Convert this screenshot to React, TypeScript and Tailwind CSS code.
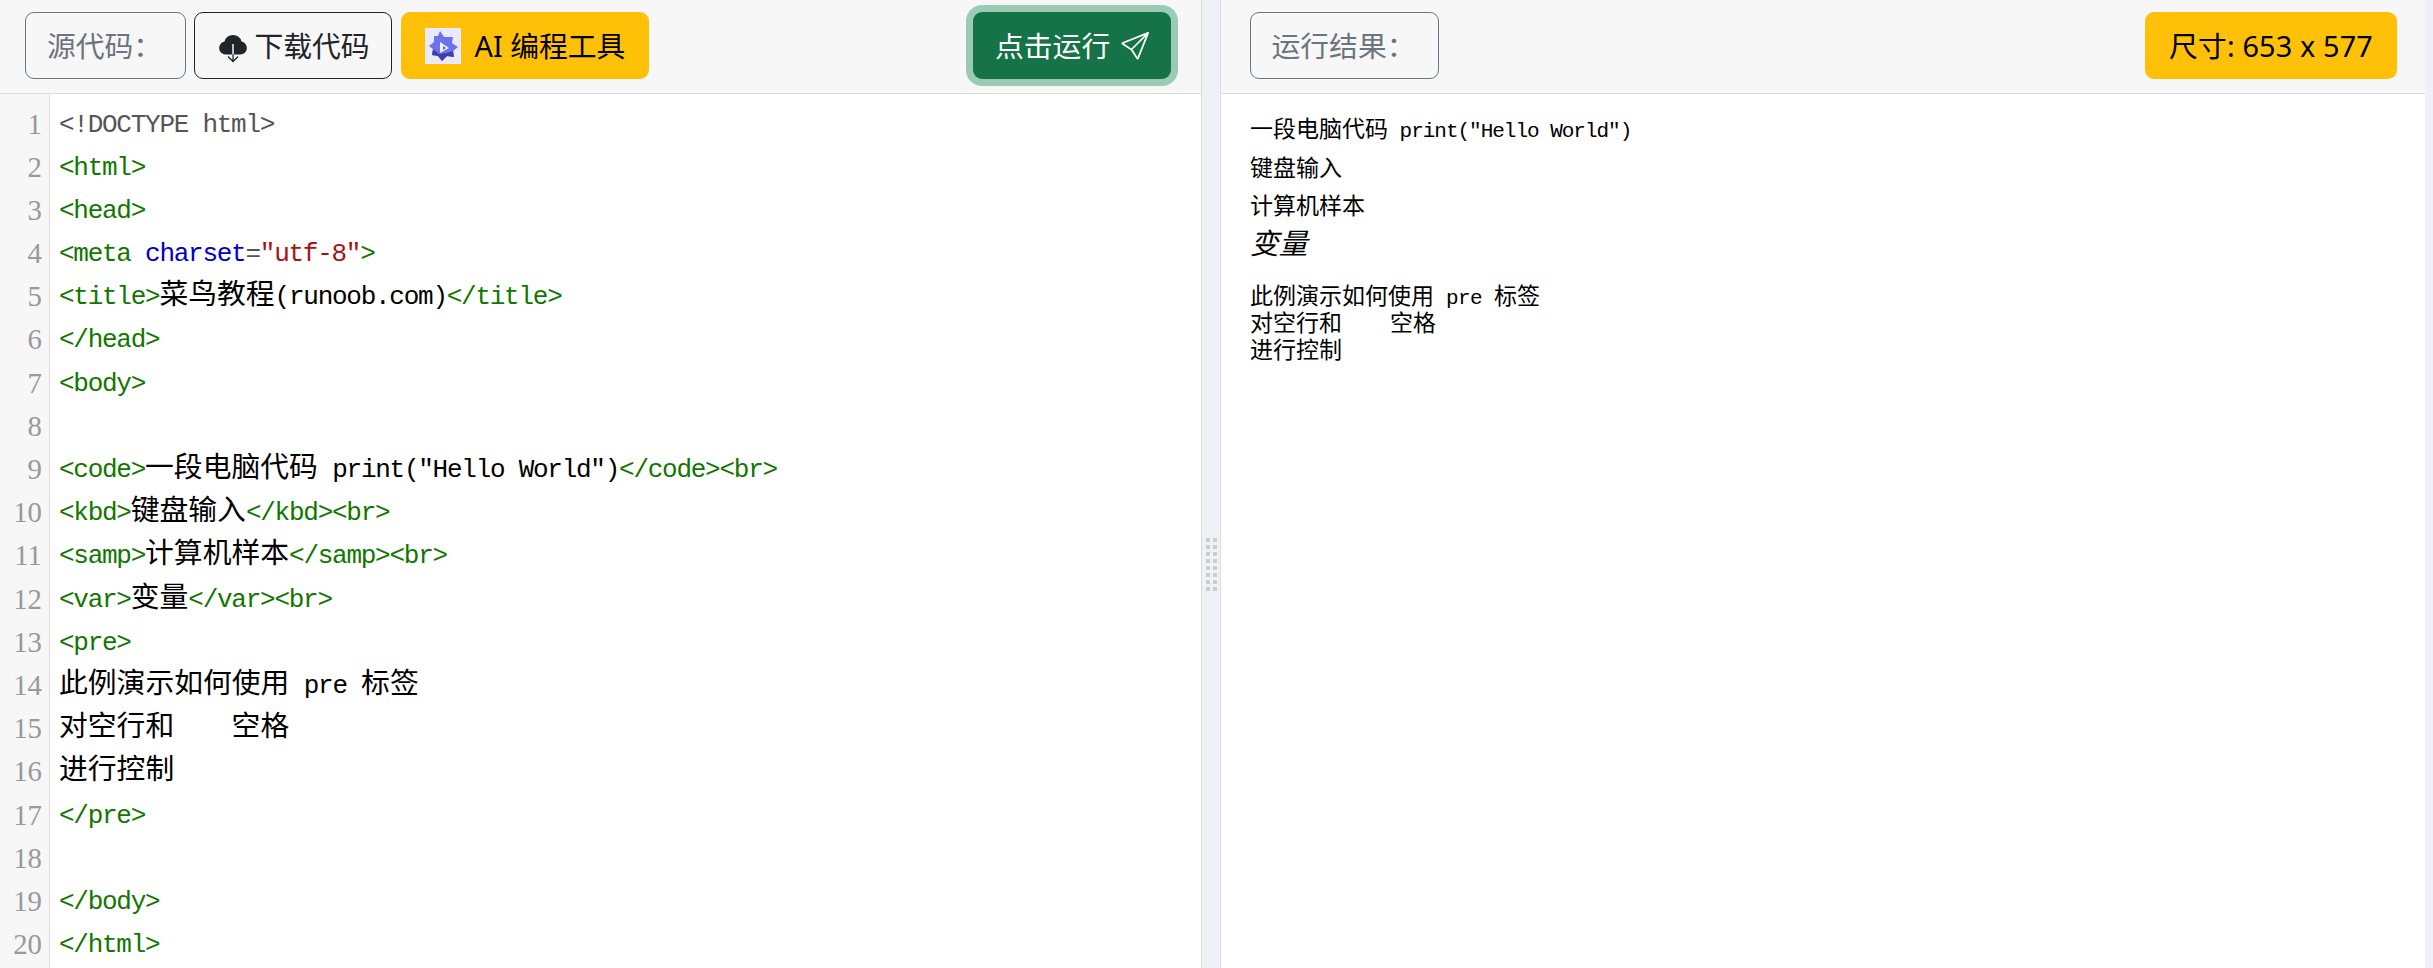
import React from "react";
import { BsSend } from "react-icons/bs";

const MONO = "font-['Liberation_Mono','Noto_Sans_CJK_SC',monospace]";

function Mixed({ text, latin, cjk }: { text: string; latin: string; cjk: string }) {
  const parts = text.match(/[\u2E80-\uFFFF]+|[^\u2E80-\uFFFF]+/g) || [];
  return (
    <>
      {parts.map((p, i) =>
        /[\u2E80-\uFFFF]/.test(p) ? (
          <span key={i} className={cjk}>{p}</span>
        ) : (
          <span key={i} className={latin}>{p}</span>
        )
      )}
    </>
  );
}

type Seg = [string, string];
const T = "text-[#117700]";
const K = "text-black";
const LINES: Seg[][] = [
  [["<!DOCTYPE html>", "text-[#555555]"]],
  [["<html>", T]],
  [["<head>", T]],
  [["<meta ", T], ["charset", "text-[#0000cc]"], ["=", "text-[#555555]"], ["\"utf-8\"", "text-[#aa1111]"], [">", T]],
  [["<title>", T], ["菜鸟教程(runoob.com)", K], ["</title>", T]],
  [["</head>", T]],
  [["<body>", T]],
  [],
  [["<code>", T], ["一段电脑代码 print(\"Hello World\")", K], ["</code><br>", T]],
  [["<kbd>", T], ["键盘输入", K], ["</kbd><br>", T]],
  [["<samp>", T], ["计算机样本", K], ["</samp><br>", T]],
  [["<var>", T], ["变量", K], ["</var><br>", T]],
  [["<pre>", T]],
  [["此例演示如何使用 pre 标签", K]],
  [["对空行和    空格", K]],
  [["进行控制", K]],
  [["</pre>", T]],
  [],
  [["</body>", T]],
  [["</html>", T]],
];

function Code({ text, className }: { text: string; className: string }) {
  return (
    <span className={className}>
      <Mixed text={text} latin="text-[26px] tracking-[-1.26px]" cjk="text-[28.8px]" />
    </span>
  );
}

function Header({ children }: { children: React.ReactNode }) {
  return (
    <div className="h-[94px] shrink-0 bg-[#f7f7f7] border-b border-[#dddddd] flex items-start justify-between pt-3 font-['Noto_Sans','Noto_Sans_CJK_SC',sans-serif] text-[28.8px]">
      {children}
    </div>
  );
}

function Label({ children, width }: { children: React.ReactNode; width: string }) {
  return (
    <div className={`h-[67px] ${width} flex items-center justify-center pr-[2px] rounded-[9px] border border-[#6c757d] text-[#6c757d]`}>
      {children}
    </div>
  );
}

export default function App() {
  return (
    <div className="w-[2433px] h-[968px] overflow-hidden flex bg-[#eef1f6] pr-2">
      <section className="w-[1202px] shrink-0 flex flex-col bg-white border-r border-[#dddddd]">
        <Header>
          <div className="flex pl-[25px]">
            <Label width="w-[161px]">源代码：</Label>
            <button className="ml-2 h-[67px] w-[198px] flex items-center justify-center gap-[6px] pl-[2px] rounded-[9px] border border-[#212529] text-[#212529]">
              <svg viewBox="0 0 30 30" className="w-[30px] h-[30px] mt-1" aria-hidden="true">
                <path d="M7.5 21.5a6.5 6.5 0 0 1-1-12.9 8.8 8.8 0 0 1 17 0 6.5 6.5 0 0 1-1 12.9z" fill="#212529" />
                <path d="M10 23.5l5 5 5-5M15 21v7" fill="none" stroke="#212529" strokeWidth="1.3" />
                <path d="M15 11v10.5" fill="none" stroke="#f7f7f7" strokeWidth="1.5" />
              </svg>
              下载代码
            </button>
            <button className="ml-[9px] h-[67px] w-[248px] flex items-center justify-center gap-[14px] rounded-[9px] bg-[#ffc107] text-black">
              <svg viewBox="0 0 36 36" className="w-9 h-9" aria-hidden="true">
                <rect width="36" height="36" fill="#e8eafb" />
                <path d="M15 3l4 6 9 0-1 6 6 4-5 4 1 6-7-1-5 5-4-5-6-1 1-6-4-3 5-4 0-6 4 0z" fill="#6a72ee" />
                <path d="M8 21l-1 6 6 1 4 5 5-5 7 1-1-6-6 2-8 1z" fill="#3d3fa8" />
                <path d="M15 14l9 6-9 5z" fill="#f1f2fd" />
                <path d="M18 18l3 2-3 2z" fill="#5a5fdc" />
              </svg>
              AI 编程工具
            </button>
          </div>
          <button className="mr-[30px] h-[67px] w-[198px] flex items-center justify-start gap-[11px] pl-[22px] rounded-[9px] bg-[#157347] text-white ring-[7px] ring-[#9ccbb5]">
            点击运行
            <BsSend className="w-7 h-7" />
          </button>
        </Header>
        <div className="flex-1 flex min-h-0">
          <div className="w-[50px] shrink-0 bg-[#f7f7f7] border-r border-[#dddddd] pt-[8.5px] pr-[7px] text-right text-[#999999] font-['Liberation_Serif','Noto_Sans_CJK_SC',serif] text-[28.8px]">
            {LINES.map((_, i) => (
              <div key={i} className="h-[43.2px] leading-[43.2px]">{i + 1}</div>
            ))}
          </div>
          <pre className={`flex-1 pt-[8.5px] pl-[9px] ${MONO} text-[28.8px]`}>
            {LINES.map((segs, i) => (
              <div key={i} className="h-[43.2px] leading-[43.2px] whitespace-pre">
                {segs.map((s, j) => (
                  <Code key={j} text={s[0]} className={s[1]} />
                ))}
              </div>
            ))}
          </pre>
        </div>
      </section>
      <div className="w-[18px] shrink-0 flex justify-center pt-[538px]">
        <div className="grid grid-cols-2 gap-x-[3px] gap-y-[3px] h-fit">
          {Array.from({ length: 16 }).map((_, i) => (
            <span key={i} className="w-[4px] h-[4px] bg-[#cccccc]" />
          ))}
        </div>
      </div>
      <section className="flex-1 flex flex-col bg-white border-l border-[#dddddd] min-w-0">
        <Header>
          <div className="pl-[29px]">
            <Label width="w-[189px]">运行结果：</Label>
          </div>
          <div className="mr-[28px] h-[67px] w-[252px] flex items-center justify-center rounded-[9px] bg-[#ffc107] text-black tracking-[0.15px]">
            尺寸: 653 x 577
          </div>
        </Header>
        <div className={`pl-[29px] pt-[20px] text-[23px] text-black ${MONO}`}>
          <div className="h-[37px] leading-[34px] whitespace-pre">
            <Mixed text={'一段电脑代码 print("Hello World")'} latin="text-[21px] tracking-[-1.02px]" cjk="text-[23px]" />
          </div>
          <div className="h-[38px] leading-[39px]">键盘输入</div>
          <div className="h-[35px] leading-[38px]">计算机样本</div>
          <div className="h-[41px] leading-[35px] italic font-['Noto_Sans_CJK_SC',sans-serif] text-[28.8px]">变量</div>
          <pre className={`mt-[20px] leading-[26px] text-[23px] ${MONO}`}>
            <div className="whitespace-pre"><Mixed text="此例演示如何使用 pre 标签" latin="text-[21px] tracking-[-0.6px]" cjk="text-[23px]" /></div>
            <div className="whitespace-pre"><Mixed text="对空行和    空格" latin="text-[21px] tracking-[-0.6px]" cjk="text-[23px]" /></div>
            <div className="whitespace-pre">进行控制</div>
          </pre>
        </div>
      </section>
    </div>
  );
}
